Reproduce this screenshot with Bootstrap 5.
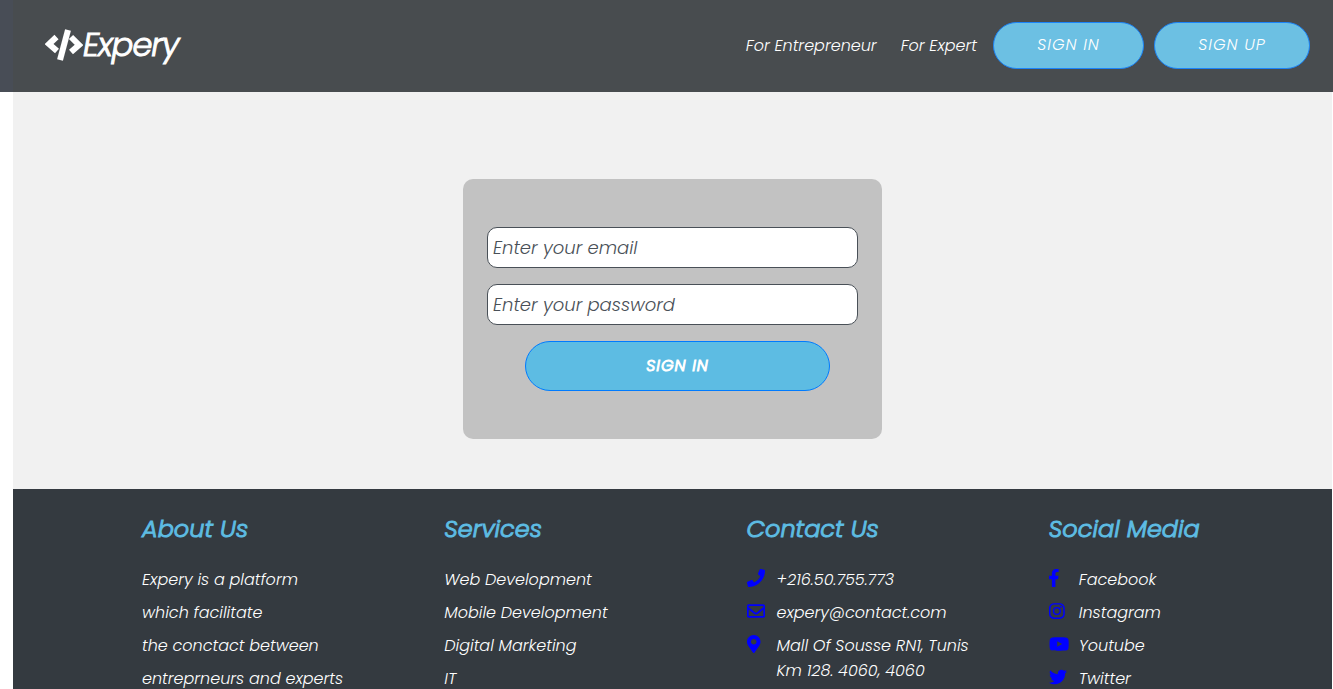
<!DOCTYPE html>
<html lang="en">
<head>
<meta charset="utf-8">
<meta name="viewport" content="width=device-width, initial-scale=1">
<title>Expery</title>
<link href="https://cdn.jsdelivr.net/npm/bootstrap@5.3.0/dist/css/bootstrap.min.css" rel="stylesheet">
<style>
  body { font-family: Poppins, Inter, sans-serif; font-size: 16px; font-weight: 300; line-height: 25px; font-style: italic; background: #fff; }
  .site-header { background: #484c4f; border-left: 13px solid #484d56; height: 92px; padding: 0 23px 2px 32px; }
  .brand { color: #fff; font-size: 32px; line-height: 40px; font-weight: 300; letter-spacing: -1px; -webkit-text-stroke: 1px #fff; }
  .brand svg { width: 38px; height: 32px; }
  .top-link { color: #fff; font-size: 16px; }
  .pill { background: #6cc0e3; border: 1px solid #1a84fa; color: #fff; font-style: italic; font-weight: 300; height: 47px; border-radius: 24px; padding: 0 40px; width: 151px; white-space: nowrap; letter-spacing: 1px; line-height: 24px; font-size: 16px; }
  .pill-wide { width: 156px; margin-left: 10px; }
  .page-body { margin: 0 1px 0 13px; }
  .sign-in-area { background: #f1f1f1; padding: 87px 16px 50px; }
  .sign-in-box { background: #c2c2c2; border-radius: 10px; width: 100%; max-width: 419px; padding: 48px 24px; }
  .field { height: 41px; border: 1px solid #495057; border-radius: 10px; padding: 0 5px; font-size: 18px; font-style: italic; font-weight: 300; background: #fff; }
  .field::placeholder { color: #495057; opacity: 1; }
  .submit { background: #5dbce3; border: 1px solid #007bff; color: #fff; font-style: italic; font-weight: 300; -webkit-text-stroke: 1px #fff; letter-spacing: 1px; height: 50px; border-radius: 25px; margin: 0 28px 0 38px; font-size: 16px; }
  .site-footer { background: #343a40; color: #fff; padding: 25px 11px 0 129px; }
  .foot-grid { display: grid; grid-template-columns: repeat(4, minmax(0, 1fr)); gap: 30px; }
  .foot-title { color: #5dbce3; font-size: 24px; line-height: 30px; margin-bottom: 23px; font-weight: 300; -webkit-text-stroke: 1px #5dbce3; }
  .foot-list li { margin-bottom: 8px; }
  .foot-list a { color: #fff; }
  .foot-list svg { width: 30px; height: 18px; flex: none; fill: #00f; margin-top: 2px; }
</style>
</head>
<body>
<header class="site-header d-flex align-items-center justify-content-between">
  <a class="brand d-flex align-items-center text-decoration-none" href="#">
    <svg viewBox="0 0 38 32" fill="none" stroke="#fff" stroke-width="6" aria-hidden="true"><path d="M11.500 8L4 15l8 7M26 8l8 8-8 7"/><path d="M23 1L15 31"/></svg>Expery</a>
  <nav class="d-flex align-items-center">
    <a class="top-link text-decoration-none me-4" href="#">For Entrepreneur</a>
    <a class="top-link text-decoration-none me-3" href="#">For Expert</a>
    <button class="btn pill" type="button">SIGN IN</button>
    <button class="btn pill pill-wide" type="button">SIGN UP</button>
  </nav>
</header>
<div class="page-body">
  <main class="sign-in-area d-flex justify-content-center">
    <form class="sign-in-box d-flex flex-column gap-3">
      <input class="field w-100" type="email" placeholder="Enter your email" aria-label="Email">
      <input class="field w-100" type="password" placeholder="Enter your password" aria-label="Password">
      <button class="btn submit" type="button">SIGN IN</button>
    </form>
  </main>
  <footer class="site-footer">
    <div class="foot-grid">
      <section>
        <h2 class="foot-title">About Us</h2>
        <ul class="foot-list list-unstyled mb-0">
          <li>Expery is a platform</li><li>which facilitate</li><li>the conctact between</li><li>entreprneurs and experts</li>
        </ul>
      </section>
      <section>
        <h2 class="foot-title">Services</h2>
        <ul class="foot-list list-unstyled mb-0">
          <li>Web Development</li><li>Mobile Development</li><li>Digital Marketing</li><li>IT</li>
        </ul>
      </section>
      <section>
        <h2 class="foot-title">Contact Us</h2>
        <ul class="foot-list list-unstyled mb-0">
          <li class="d-flex"><svg viewBox="0 0 512 512" preserveAspectRatio="xMinYMid" aria-hidden="true"><path d="M493.400 24.600l-104-24c-11.300-2.600-22.900 3.300-27.500 13.900l-48 112c-4.200 9.800-1.400 21.300 6.900 28l60.600 49.600c-36 76.700-98.900 140.500-177.200 177.200l-49.600-60.600c-6.800-8.300-18.200-11.100-28-6.900l-112 48C3.900 366.500-2 378.100.6 389.400l24 104C27.100 504.200 36.700 512 48 512c256.100 0 464-207.500 464-464 0-11.200-7.700-20.900-18.600-23.400z"/></svg><span>+216.50.755.773</span></li>
          <li class="d-flex"><svg viewBox="0 0 512 512" preserveAspectRatio="xMinYMid" aria-hidden="true"><path d="M464 64H48C21.500 64 0 85.500 0 112v288c0 26.500 21.500 48 48 48h416c26.500 0 48-21.500 48-48V112c0-26.500-21.500-48-48-48zm0 48v40.800c-22.400 18.300-58.200 46.700-134.600 106.500-16.800 13.200-50.200 45.100-73.400 44.700-23.200.4-56.600-31.500-73.400-44.700C106.200 199.500 70.400 171.100 48 152.800V112h416zM48 400V214.400c22.900 18.300 55.400 43.900 104.900 82.600 21.900 17.200 60.100 55.200 103.100 55 42.700.2 80.500-37.200 103.100-54.900 49.500-38.800 82-64.400 104.900-82.700V400H48z"/></svg><span>expery@contact.com</span></li>
          <li class="d-flex"><svg viewBox="0 0 384 512" preserveAspectRatio="xMinYMid" aria-hidden="true"><path d="M172.300 501.700C27 291 0 269.400 0 192 0 86 86 0 192 0s192 86 192 192c0 77.400-27 99-172.300 309.700-9.500 13.800-29.900 13.800-39.400 0zM192 272c44.200 0 80-35.800 80-80s-35.800-80-80-80-80 35.800-80 80 35.800 80 80 80z"/></svg><span>Mall Of Sousse RN1, Tunis<br>Km 128. 4060, 4060</span></li>
        </ul>
      </section>
      <section>
        <h2 class="foot-title">Social Media</h2>
        <ul class="foot-list list-unstyled mb-0">
          <li class="d-flex"><svg viewBox="22 0 320 512" preserveAspectRatio="xMinYMid" aria-hidden="true"><path d="M279.100 288l14.200-92.700h-88.900v-60.100c0-25.400 12.400-50.100 52.200-50.100H297V6.300S260.400 0 225.400 0C152.200 0 104.300 44.400 104.300 124.700v70.600H22.900V288h81.400v224h100.200V288z"/></svg><a class="text-decoration-none" href="#">Facebook</a></li>
          <li class="d-flex"><svg viewBox="0 0 512 512" preserveAspectRatio="xMinYMid" fill-rule="evenodd" aria-hidden="true"><path d="M144 32h160C388 32 448 92 448 176v160c0 84-60 144-144 144H144C60 480 0 420 0 336V176C0 92 60 32 144 32zM144 74C84 74 42 116 42 176v160c0 60 42 102 102 102h160c60 0 102-42 102-102V176c0-60-42-102-102-102zM224 141a115 115 0 1 0 0 230 115 115 0 1 0 0-230zM224 181a75 75 0 1 1 0 150 75 75 0 1 1 0-150z"/><circle cx="343" cy="136" r="27"/></svg><a class="text-decoration-none" href="#">Instagram</a></li>
          <li class="d-flex"><svg viewBox="0 0 576 512" preserveAspectRatio="xMinYMid" aria-hidden="true"><path d="M549.700 124.100c-6.300-23.700-24.800-42.300-48.300-48.600C458.800 64 288 64 288 64S117.200 64 74.600 75.500c-23.500 6.300-42 24.900-48.300 48.600C14.900 167 14.900 256.400 14.900 256.400s0 89.400 11.400 132.300c6.300 23.700 24.800 41.500 48.300 47.800C117.200 448 288 448 288 448s170.800 0 213.400-11.500c23.500-6.300 42-24.200 48.300-47.800 11.400-42.900 11.400-132.300 11.400-132.300s0-89.400-11.400-132.300zM232.200 337.600V175.200l142.700 81.200z"/></svg><a class="text-decoration-none" href="#">Youtube</a></li>
          <li class="d-flex"><svg viewBox="0 0 512 512" preserveAspectRatio="xMinYMid" aria-hidden="true"><path d="M459.400 151.700c.3 4.500.3 9.100.3 13.600 0 138.700-105.600 298.600-298.600 298.600-59.500 0-114.700-17.200-161.100-47.100 8.400 1 16.600 1.300 25.300 1.300 49.100 0 94.200-16.600 130.300-44.800-46.100-1-84.800-31.200-98.100-72.800 6.500 1 13 1.600 19.800 1.600 9.400 0 18.800-1.300 27.600-3.600-48.100-9.700-84.100-52-84.100-103v-1.300c14 7.800 30.200 12.700 47.400 13.300-28.300-18.800-46.800-51-46.800-87.400 0-19.500 5.200-37.400 14.300-53 51.700 63.700 129.300 105.300 216.400 109.800-1.600-7.800-2.600-15.900-2.600-24 0-57.800 46.800-104.900 104.900-104.900 30.200 0 57.500 12.700 76.700 33.100 23.700-4.500 46.500-13.300 66.600-25.300-7.800 24.400-24.400 44.800-46.100 57.800 21.100-2.300 41.600-8.100 60.400-16.200-14.300 20.800-32.200 39.300-52.600 54.300z"/></svg><a class="text-decoration-none" href="#">Twitter</a></li>
        </ul>
      </section>
    </div>
  </footer>
</div>
<script src="https://cdn.jsdelivr.net/npm/bootstrap@5.3.0/dist/js/bootstrap.bundle.min.js"></script>
</body>
</html>
